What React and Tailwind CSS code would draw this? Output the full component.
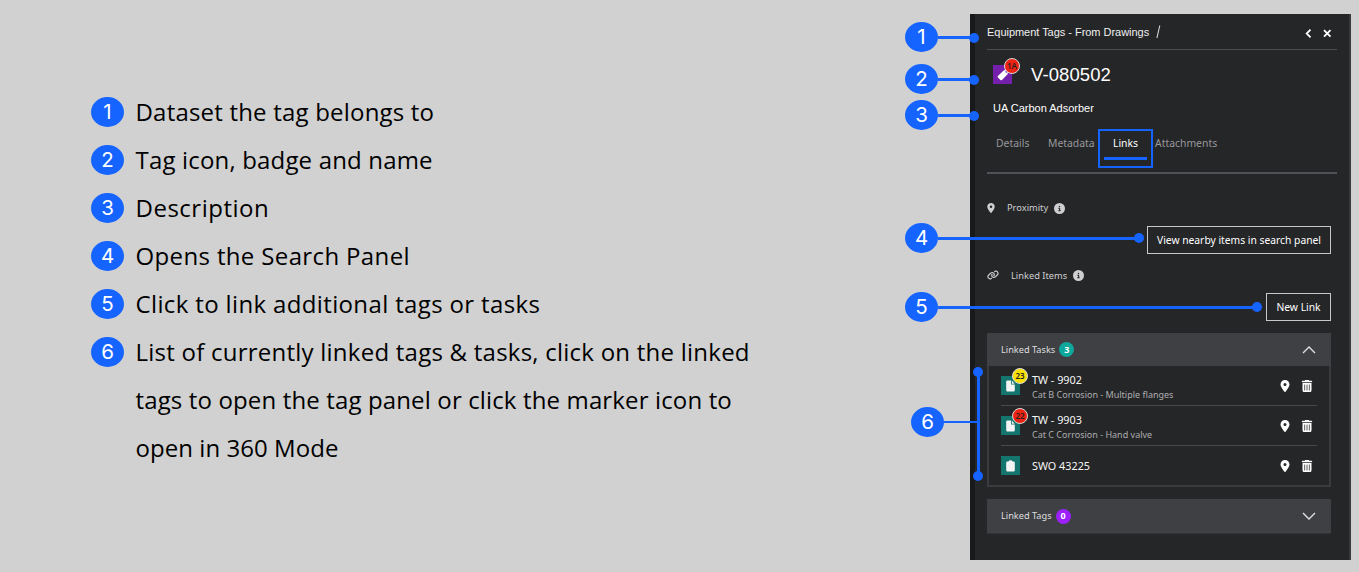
import React from 'react';
import { FaLocationDot, FaTrashCan, FaCircleInfo, FaLink } from 'react-icons/fa6';

const legend = [
  [{ text: 'Dataset the tag belongs to', tracking: 'tracking-[0.2px]' }],
  [{ text: 'Tag icon, badge and name', tracking: 'tracking-[0.17px]' }],
  [{ text: 'Description', tracking: 'tracking-[0.5px]' }],
  [{ text: 'Opens the Search Panel', tracking: 'tracking-[0.36px]' }],
  [{ text: 'Click to link additional tags or tasks', tracking: 'tracking-[0.36px]' }],
  [
    { text: 'List of currently linked tags & tasks, click on the linked', tracking: 'tracking-[0.24px]' },
    { text: 'tags to open the tag panel or click the marker icon to', tracking: 'tracking-[0.14px]' },
    { text: 'open in 360 Mode', tracking: 'tracking-[0.05px]' },
  ],
];

// Callouts drawn over the panel
const callouts = [
  { number: 1, bubble: 'left-[905px] top-[22px]', line: 'left-[938px] top-[36px] w-[37px]', dot: 'left-[969px] top-[33px]' },
  { number: 2, bubble: 'left-[905px] top-[64px]', line: 'left-[938px] top-[78px] w-[37px]', dot: 'left-[969px] top-[75px]' },
  { number: 3, bubble: 'left-[905px] top-[100px]', line: 'left-[938px] top-[114px] w-[37px]', dot: 'left-[969px] top-[111px]' },
  { number: 4, bubble: 'left-[905px] top-[223px]', line: 'left-[938px] top-[237px] w-[201px]', dot: 'left-[1134px] top-[233px]' },
  { number: 5, bubble: 'left-[905px] top-[292px]', line: 'left-[938px] top-[306px] w-[318px]', dot: 'left-[1252px] top-[302px]' },
];

const tasks = [
  { name: 'TW - 9902', description: 'Cat B Corrosion - Multiple flanges', badge: '23', badgeColor: 'bg-[#fae000]' },
  { name: 'TW - 9903', description: 'Cat C Corrosion - Hand valve', badge: '22', badgeColor: 'bg-[#ee2314]' },
  { name: 'SWO 43225' },
];

function NumberBubble({ number, className }) {
  return (
    <span className={`flex h-[30px] w-[33px] shrink-0 items-center justify-center rounded-[50%] bg-[#1664ff] font-[Inter,sans-serif] text-[20.5px] leading-none text-white ${className}`}>
      {number}
    </span>
  );
}

function IconBadge({ label, className }) {
  return (
    <span className={`absolute flex h-4 w-4 items-center justify-center rounded-full border border-[#d8d8d8] text-[8px] leading-none font-semibold text-[#222] ${className}`}>
      {label}
    </span>
  );
}

function TagIcon() {
  return (
    <svg width="12" height="12" viewBox="0 0 12 12">
      <path
        d="M6.6 1.6L10 .6Q11 .4 11 1.4L10.6 5.2L5 10.9Q4.2 11.6 3.4 10.9L.9 8.4Q.2 7.6 .9 6.9ZM9.2 1.9A.9 .9 0 1 0 9.2 3.7A.9 .9 0 1 0 9.2 1.9Z"
        fill="#fff"
        fillRule="evenodd"
      />
    </svg>
  );
}

function FileIcon() {
  return (
    <svg width="9" height="12" viewBox="0 0 9 12" fill="#f4f4f4">
      <path d="M1.3 .5H5V3.9Q5 4.6 5.7 4.6H8.8V10.3Q8.8 11.5 7.6 11.5H1.4Q.2 11.5 .2 10.3V1.7Q.2 .5 1.3 .5Z" />
      <path d="M5.8 .6L8.7 3.8H5.8Z" />
    </svg>
  );
}

function ClipboardIcon() {
  return (
    <svg width="9" height="12" viewBox="0 0 9 12" fill="#f4f4f4">
      <path d="M1.4 1.5H2.5Q2.9 .3 4.5 .3T6.5 1.5H7.6Q8.8 1.5 8.8 2.7V10.3Q8.8 11.5 7.6 11.5H1.4Q.2 11.5 .2 10.3V2.7Q.2 1.5 1.4 1.5Z" />
    </svg>
  );
}

function Chevron({ up }) {
  return (
    <svg width="14" height="8" viewBox="0 0 14 8" fill="none" stroke="#e0e0e0" strokeWidth="1.4">
      <path d={up ? 'M1 7L7 1L13 7' : 'M1 1L7 7L13 1'} />
    </svg>
  );
}

function Legend() {
  return (
    <ol className="ml-[91px] mt-[88px] flex w-[700px] flex-col">
      {legend.map((lines, i) => (
        <li key={i} className="flex gap-[11.5px]">
          <NumberBubble number={i + 1} className="mt-[9px]" />
          <div className="font-['Open_Sans',sans-serif] text-[24px] leading-[48px] text-black">
            {lines.map((line) => (
              <div key={line.text} className={`whitespace-nowrap ${line.tracking}`}>{line.text}</div>
            ))}
          </div>
        </li>
      ))}
    </ol>
  );
}

function TaskRow({ task, last }) {
  return (
    <div className={`ml-3 mr-3 flex items-center ${last ? 'h-[39px]' : 'h-10 border-b border-[#48494d]'}`}>
      <div className="relative flex h-[19px] w-[19px] items-center justify-center bg-[#14756e]">
        {last ? <ClipboardIcon /> : <FileIcon />}
        {task.badge && <IconBadge label={task.badge} className={`-top-[8px] left-[11px] ${task.badgeColor}`} />}
      </div>
      <div className={`ml-3 flex-1 whitespace-nowrap ${last ? '' : 'pt-[3px]'}`}>
        <div className="text-[10.8px] leading-[15px] text-[#f6f6f6]">{task.name}</div>
        {task.description && <div className="text-[9px] leading-[15px] text-[#adadaf]">{task.description}</div>}
      </div>
      <FaLocationDot size={12} className="mr-[10px] text-white" />
      <FaTrashCan size={12} className="mr-[4px] text-white" />
    </div>
  );
}

function TagPanel() {
  return (
    <div className="ml-[179px] mt-[14px] h-[546px] w-[381px] border-l-[5px] border-r-2 border-l-[#18191b] border-r-[#38393d] bg-[#252628] pl-3 pr-3 font-['Noto_Sans',sans-serif]">
      <div className="flex h-9 items-center border-b border-[#4b4c50] text-[#f0f0f0]">
        <span className="mt-[2px] font-['Liberation_Sans',sans-serif] text-[11px] tracking-[-0.03px] whitespace-nowrap">Equipment Tags - From Drawings</span>
        <svg className="ml-[7px]" width="5" height="14" viewBox="0 0 5 14" fill="none" stroke="#e4e4e4">
          <path d="M3.8 .5L.9 13" />
        </svg>
        <svg className="ml-auto mr-[5px] mt-[3px]" width="27" height="9" viewBox="0 0 27 9" fill="none" stroke="#fff" strokeWidth="1.8">
          <path d="M5.5 .7L1.7 4.5L5.5 8.3M19 1.2L25.5 7.7M25.5 1.2L19 7.7" />
        </svg>
      </div>

      <div className="flex h-[49px] items-center pl-[6px]">
        <div className="relative flex h-[19px] w-[19px] items-center justify-center bg-[#7420ac]">
          <TagIcon />
          <IconBadge label="1A" className="-top-[7px] left-[11px] bg-[#ee2314]" />
        </div>
        <h1 className="ml-[19px] font-['Liberation_Sans',sans-serif] text-[18.5px] tracking-[0.1px] text-white">V-080502</h1>
      </div>
      <p className="pl-[6px] font-['Liberation_Sans',sans-serif] text-[11px] leading-[18px] text-white">UA Carbon Adsorber</p>

      <div className="mt-[12px] flex h-[45px] border-b-2 border-[#505156] text-[10.4px] leading-[28px] text-[#98989b]">
        <span className="ml-[9px] w-[52px]">Details</span>
        <span className="w-[50px]">Metadata</span>
        <div className="h-[39px] w-[55px] border-2 border-[#1664ff] text-center text-white">
          <div className="h-[26px] leading-[24px]">Links</div>
          <div className="mx-[4px] h-[3px] bg-[#1664ff]" />
        </div>
        <span className="ml-[2px]">Attachments</span>
      </div>

      <div className="mt-[24px] flex h-5 items-center text-[9.3px] text-[#cfcfd1]">
        <FaLocationDot size={10} className="-ml-[1px]" />
        <span className="ml-[11px]">Proximity</span>
        <FaCircleInfo size={11} className="ml-[6px]" />
      </div>
      <div className="mt-2 mr-[6px] flex justify-end">
        <button className="h-7 w-[184px] border border-[#c8c8ca] pt-[2px] text-[10.3px] whitespace-nowrap text-white">View nearby items in search panel</button>
      </div>

      <div className="mt-[11px] flex h-5 items-center text-[9.3px] text-[#cfcfd1]">
        <FaLink size={12} />
        <span className="ml-[12px] pt-px">Linked Items</span>
        <FaCircleInfo size={11} className="ml-[6px]" />
      </div>
      <div className="mt-2 mr-[6px] flex justify-end">
        <button className="h-7 w-[65px] border border-[#c8c8ca] pt-[2px] text-[10.3px] whitespace-nowrap text-white">New Link</button>
      </div>

      <section className="mt-3 mr-[6px] h-[154px] border-2 border-t-0 border-[#3a3b3f]">
        <div className="-mx-[2px] flex h-[33px] items-center bg-[#3f4044] pl-[14px] pr-[15px] text-[9.2px] text-[#dededf]">
          Linked Tasks
          <span className="ml-1 flex h-[15px] w-[15px] items-center justify-center rounded-full bg-[#0ea79c] text-[9px] font-bold text-white">3</span>
          <span className="ml-auto"><Chevron up /></span>
        </div>
        {tasks.map((task, i) => (
          <TaskRow key={task.name} task={task} last={i === tasks.length - 1} />
        ))}
      </section>

      <section className="mt-3 mr-[6px] flex h-[35px] items-center border-b border-[#333438] bg-[#3f4044] pl-[14px] pr-[15px] text-[9.2px] text-[#dededf]">
        Linked Tags
        <span className="ml-1 flex h-[15px] w-[15px] items-center justify-center rounded-full bg-[#9c20fa] text-[9px] font-bold text-white">0</span>
        <span className="ml-auto"><Chevron /></span>
      </section>
    </div>
  );
}

export default function App() {
  return (
    <div className="relative flex h-[572px] w-[1359px] items-start overflow-hidden bg-[#d1d1d1]">
      <Legend />
      <TagPanel />

      {callouts.map((c) => (
        <React.Fragment key={c.number}>
          <div className={`absolute h-[3px] bg-[#1664ff] ${c.line}`} />
          <div className={`absolute h-[10px] w-[10px] rounded-full bg-[#1664ff] ${c.dot}`} />
          <NumberBubble number={c.number} className={`absolute ${c.bubble}`} />
        </React.Fragment>
      ))}

      {/* Bracket spanning the list of tasks */}
      <div className="absolute left-[943px] top-[421px] h-[2px] w-[35px] bg-[#1664ff]" />
      <div className="absolute left-[977px] top-[372px] h-[104px] w-[3px] bg-[#1664ff]" />
      <div className="absolute left-[973px] top-[367px] h-[10px] w-[10px] rounded-full bg-[#1664ff]" />
      <div className="absolute left-[973px] top-[471px] h-[10px] w-[10px] rounded-full bg-[#1664ff]" />
      <NumberBubble number={6} className="absolute left-[911px] top-[407px]" />
    </div>
  );
}
